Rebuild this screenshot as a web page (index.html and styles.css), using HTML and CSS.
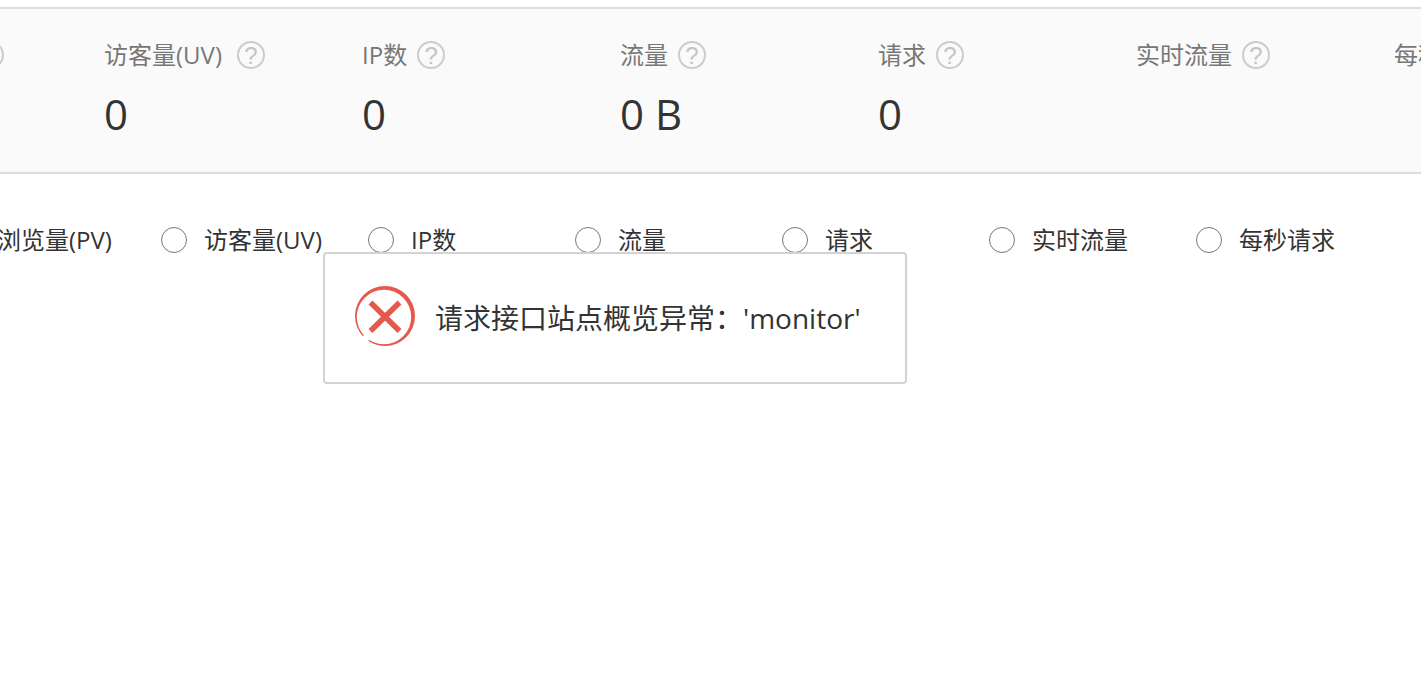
FILE: index.html
```html
<!DOCTYPE html>
<html lang="zh-CN">
<head>
<meta charset="utf-8">
<title>站点概览</title>
<link rel="stylesheet" href="styles.css">
</head>
<body>
<main class="overview">
  <section class="stats">
    <dl class="stat"><dt class="stat-name stat-name-unit">浏览量(PV)<a class="help" href="#">?</a></dt><dd class="stat-value">0</dd></dl>
    <dl class="stat"><dt class="stat-name stat-name-unit">访客量(UV)<a class="help" href="#">?</a></dt><dd class="stat-value">0</dd></dl>
    <dl class="stat"><dt class="stat-name">IP数<a class="help" href="#">?</a></dt><dd class="stat-value">0</dd></dl>
    <dl class="stat"><dt class="stat-name">流量<a class="help" href="#">?</a></dt><dd class="stat-value">0 B</dd></dl>
    <dl class="stat"><dt class="stat-name">请求<a class="help" href="#">?</a></dt><dd class="stat-value">0</dd></dl>
    <dl class="stat"><dt class="stat-name">实时流量<a class="help" href="#">?</a></dt><dd class="stat-value"></dd></dl>
    <dl class="stat"><dt class="stat-name">每秒请求<a class="help" href="#">?</a></dt><dd class="stat-value"></dd></dl>
  </section>
  <form class="metrics">
    <label class="metric"><input class="radio" type="radio" name="metric">浏览量(PV)</label>
    <label class="metric"><input class="radio" type="radio" name="metric">访客量(UV)</label>
    <label class="metric"><input class="radio" type="radio" name="metric">IP数</label>
    <label class="metric"><input class="radio" type="radio" name="metric">流量</label>
    <label class="metric"><input class="radio" type="radio" name="metric">请求</label>
    <label class="metric"><input class="radio" type="radio" name="metric">实时流量</label>
    <label class="metric"><input class="radio" type="radio" name="metric">每秒请求</label>
  </form>
</main>
<div class="message" role="alert">
  <svg class="message-icon" viewBox="0 0 60 60" fill="none" aria-hidden="true">
    <path fill="#e5584b" fill-rule="evenodd" d="M30 0A30 30 0 0 1 30 60A30 30 0 0 1 30 0ZM29 3.800A27.200 27.200 0 0 0 29 58.200A27.200 27.200 0 0 0 29 3.800Z"/>
    <path stroke="#fff" stroke-width="7" d="M7 56L15 48"/>
    <path stroke="#e5584b" stroke-width="5.500" d="M15.500 16.500L44.500 45M44.500 16.500L15.500 45"/>
  </svg>
  <p class="message-text">请求接口站点概览异常：'monitor'</p>
</div>
</body>
</html>
```
FILE: styles.css
```css
* {
  box-sizing: border-box;
}

body {
  margin: 0;
  background: #fff;
  color: #333;
  font: 24px/32px "Open Sans", "Noto Sans CJK SC", sans-serif;
}

.overview {
  padding-top: 7px;
  overflow: hidden;
}

.stats {
  display: flex;
  height: 167px;
  padding-top: 30px;
  margin-left: -154px;
  border: solid #ddd;
  border-width: 2px 0;
  background: #fafafa;
}

.stat {
  flex: 0 0 258px;
  margin: 0;
}

.stat-name {
  display: flex;
  align-items: center;
  gap: 10px;
  color: #777;
}

.stat-name-unit {
  gap: 15px;
}

.help {
  width: 28px;
  height: 28px;
  border: 2px solid #ccc;
  border-radius: 50%;
  color: #c4c4c4;
  font: 24px/26px "Liberation Sans", sans-serif;
  text-align: center;
  text-decoration: none;
}

.stat-value {
  margin: 15px 0 0;
  font-size: 42px;
  line-height: 56px;
}

.metrics {
  display: flex;
  margin: 50px 0 0 -46px;
}

.metric {
  display: flex;
  flex: 0 0 207px;
  align-items: center;
  gap: 17px;
  white-space: nowrap;
}

.radio {
  appearance: none;
  flex: none;
  width: 26px;
  height: 26px;
  margin: 0;
  border: 1px solid #767676;
  border-radius: 50%;
  background: #fff;
}

.message {
  position: fixed;
  top: 252px;
  left: 323px;
  display: flex;
  align-items: flex-start;
  gap: 20px;
  padding: 32px 44px 32px 30px;
  border: 2px solid #d3d3d3;
  border-radius: 4px;
  background: #fff;
}

.message-icon {
  width: 60px;
  height: 60px;
}

.message-text {
  margin: 0;
  font-size: 28px;
  line-height: 64px;
  white-space: nowrap;
}
```
